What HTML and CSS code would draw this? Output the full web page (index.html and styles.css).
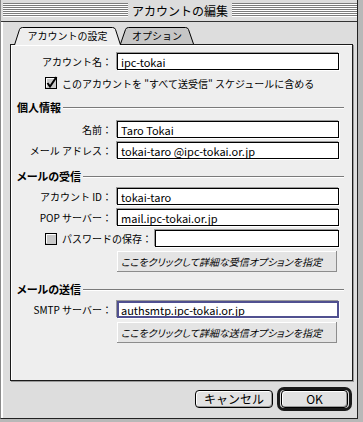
FILE: index.html
```html
<!DOCTYPE html>
<html lang="ja">
<head>
    <meta charset="UTF-8">
    <meta name="viewport" content="width=device-width, initial-scale=1.0">
    <title>アカウントの編集</title>
    <link rel="stylesheet" href="styles.css">
</head>
<body>
    <div class="window">
        <div class="titlebar">
            <span class="stripes"></span>
            <span class="title">アカウントの編集</span>
            <span class="stripes"></span>
        </div>

        <div class="tabs">
            <div class="tab tab-active">
                <svg class="tab-shape" width="107" height="18" viewBox="0 0 107 18"><path d="M0.5 18 L5.5 2.5 Q6.2 0.5 8.5 0.5 H98.5 Q100.8 0.5 101.5 2.5 L106.5 18"/></svg>
                <span class="tab-label">アカウントの設定</span>
            </div>
            <div class="tab">
                <svg class="tab-shape" width="74" height="17" viewBox="0 0 74 17"><path d="M0.5 17 L5.5 2.5 Q6.2 0.5 8.5 0.5 H65.5 Q67.8 0.5 68.5 2.5 L73.5 17"/></svg>
                <span class="tab-label">オプション</span>
            </div>
        </div>

        <div class="panel">
            <div class="field">
                <label class="field-label" for="account_name">アカウント名：</label>
                <input class="text-input" type="text" id="account_name" value="ipc-tokai">
            </div>
            <div class="check-row">
                <svg class="checkbox" width="13" height="13" viewBox="0 0 13 13">
                    <rect x="0.5" y="1.5" width="11" height="11" fill="#c9c9c9" stroke="#000"/>
                    <path d="M1.5 11V2.5H10.5" fill="none" stroke="#fff"/>
                    <path d="M2.5 7 L5 10.5 L11.5 1" fill="none" stroke="#000" stroke-width="2"/>
                </svg>
                <span>このアカウントを "すべて送受信" スケジュールに含める</span>
            </div>

            <div class="section-title section-first"><span>個人情報</span></div>
            <div class="field">
                <label class="field-label" for="real_name">名前：</label>
                <input class="text-input" type="text" id="real_name" value="Taro Tokai">
            </div>
            <div class="field">
                <label class="field-label" for="email">メール アドレス：</label>
                <input class="text-input" type="text" id="email" value="tokai-taro @ipc-tokai.or.jp">
            </div>

            <div class="section-title"><span>メールの受信</span></div>
            <div class="field">
                <label class="field-label" for="account_id">アカウント ID：</label>
                <input class="text-input" type="text" id="account_id" value="tokai-taro">
            </div>
            <div class="field">
                <label class="field-label" for="pop_server">POP サーバー：</label>
                <input class="text-input" type="text" id="pop_server" value="mail.ipc-tokai.or.jp">
            </div>
            <div class="field password-row">
                <svg class="checkbox" width="13" height="13" viewBox="0 0 13 13">
                    <rect x="0.5" y="1.5" width="11" height="11" fill="#c9c9c9" stroke="#000"/>
                    <path d="M1.5 11V2.5H10.5" fill="none" stroke="#fff"/>
                    <path d="M2 12V12.5H11.5V3" fill="none" stroke="#000"/>
                </svg>
                <label class="password-label" for="password">パスワードの保存：</label>
                <input class="text-input password-input" type="password" id="password" value="">
            </div>
            <button class="option-button" type="button">ここをクリックして詳細な受信オプションを指定</button>

            <div class="section-title section-send"><span>メールの送信</span></div>
            <div class="field">
                <label class="field-label" for="smtp_server">SMTP サーバー：</label>
                <input class="text-input text-input-focus" type="text" id="smtp_server" value="authsmtp.ipc-tokai.or.jp">
            </div>
            <button class="option-button" type="button">ここをクリックして詳細な送信オプションを指定</button>
        </div>

        <div class="actions">
            <button class="btn btn-cancel" type="button">キャンセル</button>
            <span class="default-ring"><button class="btn btn-ok" type="button">OK</button></span>
        </div>
    </div>
</body>
</html>
```

FILE: styles.css
```css
* {
    box-sizing: border-box;
}
body {
    margin: 0;
    background: #b8b8b8;
    font-family: "Noto Sans CJK JP", "Noto Sans", sans-serif;
    font-size: 10px;
    color: #000;
}
.window {
    width: 358px;
    height: 419px;
    background: #dddddd;
    border-left: 1px solid #8a8a8a;
    border-right: 1px solid #222;
    border-bottom: 1px solid #222;
    box-shadow: inset 2px 0 0 #fff;
}

/* title bar */
.titlebar {
    height: 22px;
    display: flex;
    align-items: center;
    padding: 0 0 0 2px;
    background: #dddddd;
    border-bottom: 1px solid #333;
}
.stripes {
    flex: 1;
    height: 14px;
    margin-bottom: 1px;
    background: repeating-linear-gradient(to bottom, #7c7c7c 0, #7c7c7c 1px, #fff 1px, #fff 2px);
}
.title {
    padding: 0 4px;
    font-size: 12px;
    line-height: 14px;
}

/* tabs */
.tabs {
    display: flex;
    margin: 5px 0 -1px 13px;
    position: relative;
    z-index: 1;
}
.tab {
    position: relative;
    width: 74px;
    height: 17px;
    margin-left: -1px;
    display: flex;
    align-items: center;
    justify-content: center;
}
.tab-active {
    width: 107px;
    height: 18px;
    margin-left: 0;
    z-index: 1;
}
.tab-shape {
    position: absolute;
    left: 0;
    top: 0;
}
.tab-shape path {
    fill: #c6c6c6;
    stroke: #000;
}
.tab-active .tab-shape path {
    fill: #eeeeee;
}
.tab-label {
    position: relative;
    line-height: 12px;
    margin-top: 1px;
}
.tab-active .tab-label {
    margin-top: 0;
}

/* tab pane */
.panel {
    width: 343px;
    height: 337px;
    margin-left: 9px;
    padding-top: 8px;
    background: #eeeeee;
    border: 1px solid #1a1a1a;
    box-shadow: 1px 1px 0 #9a9a9a, inset 1px 1px 0 #fff;
}
.field {
    display: flex;
    align-items: center;
    height: 17px;
    margin-top: 4px;
}
.field:first-child {
    margin-top: 0;
}
.field-label {
    width: 101px;
    margin-right: 5px;
    text-align: right;
    line-height: 12px;
    white-space: nowrap;
}
.text-input {
    width: 222px;
    height: 17px;
    margin: 0;
    padding: 0 3px;
    font-family: "Noto Sans CJK JP", "Noto Sans", sans-serif;
    font-size: 11px;
    color: #000;
    background: #fff;
    border: 1px solid #000;
    border-radius: 0;
    box-shadow: -1px -1px 0 #9a9a9a, 1px 1px 0 #fff;
    outline: none;
}
.text-input-focus {
    border: 2px solid #505090;
    padding: 0 2px;
}
.check-row {
    display: flex;
    align-items: center;
    height: 12px;
    margin: 7px 0 0 34px;
    gap: 4px;
}
.checkbox {
    flex: none;
    display: block;
    margin-top: -1px;
}
.password-row {
    padding-left: 34px;
}
.password-label {
    width: 97px;
    padding-left: 4px;
    line-height: 12px;
    white-space: nowrap;
}
.password-input {
    width: 184px;
}
.section-title {
    display: flex;
    align-items: center;
    height: 14px;
    margin: 10px 8px 5px 6px;
    font-size: 11px;
    font-weight: bold;
    font-feature-settings: "palt";
}
.section-title::after {
    content: "";
    flex: 1;
    height: 1px;
    margin-left: 2px;
    background: #7a7a7a;
    box-shadow: 0 1px 0 #fff;
}
.section-first {
    margin-top: 11px;
    margin-bottom: 7px;
}
.section-send {
    margin-top: 10px;
    margin-bottom: 5px;
}
.option-button {
    display: block;
    width: 220px;
    height: 21px;
    margin: 4px 0 0 106px;
    padding: 0 0 0 4px;
    text-align: left;
    font-family: "Noto Sans CJK JP", "Noto Sans", sans-serif;
    font-size: 10px;
    font-style: italic;
    font-feature-settings: "palt";
    color: #000;
    background: #e4e4e4;
    border: none;
    border-right: 1px solid #8c8c8c;
    border-bottom: 1px solid #8c8c8c;
    box-shadow: inset 1px 1px 0 #fff;
}

/* bottom buttons */
.actions {
    display: flex;
    justify-content: flex-end;
    align-items: center;
    gap: 4px;
    margin-top: 6px;
    padding-right: 5px;
}
.btn {
    height: 18px;
    margin: 0;
    padding: 0;
    font-family: "Noto Sans CJK JP", "Noto Sans", sans-serif;
    font-size: 12px;
    font-weight: normal;
    line-height: 14px;
    color: #000;
    background: #e2e2e2;
    border: 1px solid #000;
    border-radius: 4px;
    box-shadow: inset 1px 1px 0 #fff, inset -1px -1px 0 #9a9a9a;
}
.btn-cancel {
    width: 78px;
}
.default-ring {
    display: flex;
    padding: 0 1px;
    border: 3px solid #1a1a1a;
    border-radius: 7px;
}
.btn-ok {
    width: 67px;
}
```
